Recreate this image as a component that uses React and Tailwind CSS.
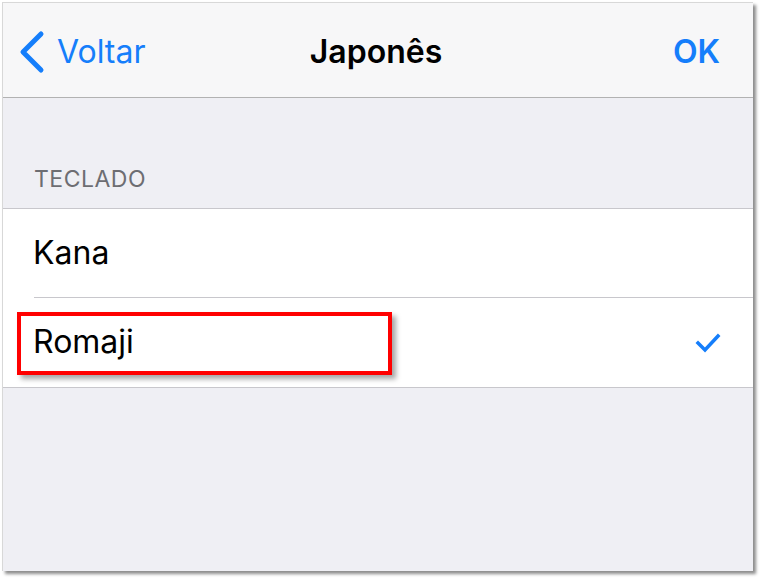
export default function App() {
  return (
    <div className="w-[760px] h-[578px] bg-white pt-[2px] pl-[2px]" style={{ fontFamily: 'Inter, "Liberation Sans", sans-serif' }}>
      <div className="w-[751px] h-[569px] flex flex-col bg-[#efeff4] border-l border-t border-[#d8d8d8] shadow-[3px_3px_3px_rgba(0,0,0,0.45)]">
        {/* nav bar */}
        <div className="h-[95px] shrink-0 bg-[#f7f7f8] border-b border-[#b2b2b2] flex items-center pl-[15px] pr-[18px] pt-[4px]">
          <div className="flex-1 flex items-center gap-[11px] text-[#157efb]">
            <svg width="28" height="44" viewBox="0 0 28 44" fill="none">
              <path d="M23 4 L5 22 L23 40" stroke="#157efb" strokeWidth="5" strokeLinecap="round" strokeLinejoin="round" />
            </svg>
            <span className="text-[32px] leading-none">Voltar</span>
          </div>
          <div className="text-[32px] font-semibold text-black leading-none pl-[14px]">Japonês</div>
          <div className="flex-1 flex justify-end pr-[15px]">
            <span className="text-[32px] font-semibold text-[#157efb] leading-none">OK</span>
          </div>
        </div>

        {/* section header */}
        <div className="h-[110px] shrink-0 flex items-end pb-[17px] pl-[31px]">
          <span className="text-[23px] text-[#6d6d72] tracking-[0.5px] leading-none">TECLADO</span>
        </div>

        {/* rows */}
        <div className="bg-white border-t border-b border-[#c8c7cc]">
          <div className="h-[88px] flex items-center pl-[30px]">
            <span className="text-[32px] text-black leading-none -mt-[1px]">Kana</span>
          </div>
          <div className="ml-[31px] border-t border-[#c8c7cc]" />
          <div className="relative h-[89px] flex items-center pl-[30px] pr-[32px]">
            <span className="flex-1 text-[32px] text-black leading-none -mt-[1px]">Romaji</span>
            <svg width="26" height="20" viewBox="0 0 26 20" fill="none">
              <path d="M3 10 L10 17 L23 3" stroke="#157efb" strokeWidth="3.5" strokeLinecap="square" />
            </svg>
            <div className="absolute left-[14px] top-[14px] w-[375px] h-[63px] border-[4px] border-[#ff0000] shadow-[4px_4px_5px_rgba(0,0,0,0.35)]" />
          </div>
        </div>
      </div>
    </div>
  );
}
